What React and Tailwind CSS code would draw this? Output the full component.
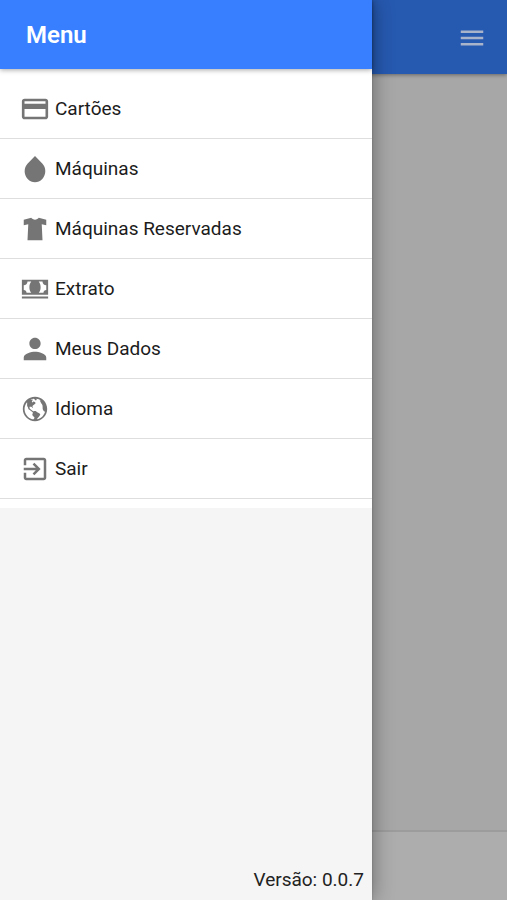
import {
  IoMdCard,
  IoMdWater,
  IoMdShirt,
  IoMdCash,
  IoMdPerson,
  IoMdGlobe,
  IoMdExit,
  IoMdMenu,
} from "react-icons/io";

const items = [
  { label: "Cartões", Icon: IoMdCard },
  { label: "Máquinas", Icon: IoMdWater },
  { label: "Máquinas Reservadas", Icon: IoMdShirt },
  { label: "Extrato", Icon: IoMdCash },
  { label: "Meus Dados", Icon: IoMdPerson },
  { label: "Idioma", Icon: IoMdGlobe },
  { label: "Sair", Icon: IoMdExit },
];

function Drawer() {
  return (
    <aside className="absolute inset-y-0 left-0 flex w-[372px] max-w-full flex-col bg-[#f5f5f5] shadow-[0_0_20px_rgba(0,0,0,0.4),0_0_2px_rgba(0,0,0,0.2)]">
      <header className="z-10 flex h-[69px] items-center bg-[#387fff] px-[26px] pt-px shadow-[0_1px_5px_rgba(0,0,0,0.35)]">
        <h1 className="text-[24px] leading-7 font-semibold text-white">Menu</h1>
      </header>
      <nav className="bg-white pt-[10px] pb-[9px]">
        <ul>
          {items.map(({ label, Icon }) => (
            <li key={label} className="border-b border-[#dedede]">
              <a href="#" className="flex h-[59px] items-center gap-[5px] pl-5 text-[19px] leading-6 text-[#1c1c1c]">
                <Icon className="size-[30px] text-[#757575]" aria-hidden="true" />
                {label}
              </a>
            </li>
          ))}
        </ul>
      </nav>
      <p className="mt-auto px-2 pb-2 text-right text-[19px] leading-6 text-[#222222]">Versão: 0.0.7</p>
    </aside>
  );
}

export default function App() {
  return (
    <div className="relative flex min-h-screen flex-col overflow-hidden bg-[#a7a7a7] font-['Roboto',sans-serif]">
      <header className="flex h-[74px] items-center justify-end bg-[#2659b0] px-5 pt-px shadow-[0_1px_4px_rgba(0,0,0,0.4)]">
        <button type="button" aria-label="Abrir menu" className="text-[#a9b4cb]">
          <IoMdMenu className="size-[30px]" aria-hidden="true" />
        </button>
      </header>
      <main className="flex-1" />
      <footer className="h-[70px] border-t-2 border-[#9c9c9c] bg-[#adadad]" />
      <Drawer />
    </div>
  );
}
